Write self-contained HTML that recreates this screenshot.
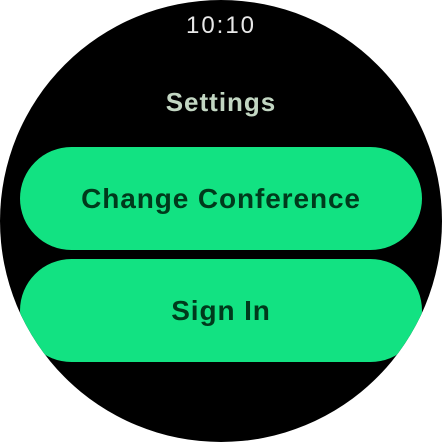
<!DOCTYPE html>
<html><head><style>
html,body{margin:0;padding:0;background:#fff;width:442px;height:442px;overflow:hidden}
.c{position:absolute;left:0;top:0;width:442px;height:442px;border-radius:50%;background:#000;overflow:hidden;font-family:"Liberation Sans",sans-serif}
.t{position:absolute;top:12px;width:100%;text-align:center;color:#e8e8e8;font-size:24px;letter-spacing:2px}
.h{position:absolute;top:87px;width:100%;text-align:center;color:#c2d6c2;font-size:26px;font-weight:bold;letter-spacing:1px}
.b{position:absolute;left:20px;width:402px;height:103px;border-radius:52px;background:#12e282;color:#003a1c;font-weight:bold;font-size:28px;text-align:center;line-height:103px;letter-spacing:0.9px}
</style></head><body>
<div class="c">
<div class="t">10:10</div>
<div class="h">Settings</div>
<div class="b" style="top:147px">Change Conference</div>
<div class="b" style="top:259px">Sign In</div>
</div>
</body></html>
